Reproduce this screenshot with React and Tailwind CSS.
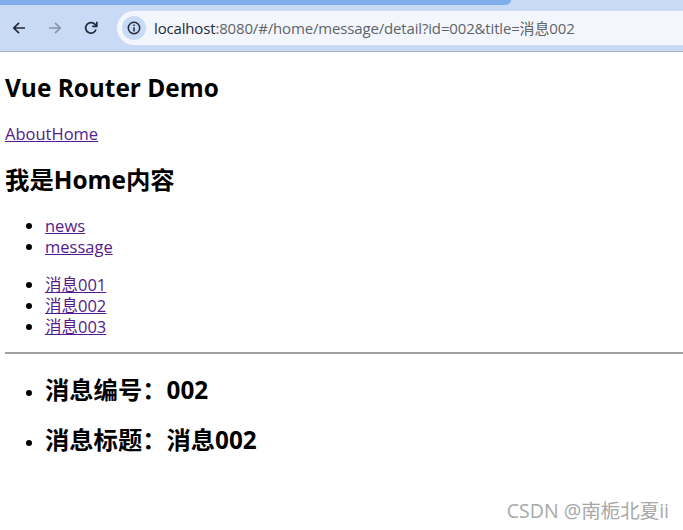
const FONT = "font-['Open_Sans','Noto_Sans_CJK_SC',sans-serif]";

function Back({ color, flip }) {
  return (
    <svg width="16" height="16" viewBox="0 0 16 16" fill="none" stroke={color} strokeWidth="1.7" style={flip ? { transform: "scaleX(-1)" } : undefined}>
      <path d="M14 8H3M8 2.8 2.8 8 8 13.2" />
    </svg>
  );
}

function Reload() {
  return (
    <svg width="16" height="16" viewBox="0 0 16 16" fill="none" stroke="#1f2937" strokeWidth="1.7">
      <path d="M13 9.5A5.3 5.3 0 1 1 11.8 4.2L13.6 6" />
      <path d="M13.8 1.8V6.4H9.2" fill="none" />
    </svg>
  );
}

function Link({ children }) {
  return <a href="#" className="text-[#551a8b] underline">{children}</a>;
}

export default function App() {
  return (
    <div className={`relative h-[530px] w-[683px] overflow-hidden bg-white text-black ${FONT}`}>
      <header className="h-[52px] border-b border-[#a5b1c2] bg-[#c8daf6]">
        <div className="h-[5px] w-[511px] rounded-br-[8px] bg-[#80adeb]" />
        <div className="flex h-[46px] items-center">
          <div className="ml-[11px] flex w-[106px] items-center">
            <span className="w-[36px]"><Back color="#1f2937" /></span>
            <span className="w-[36px]"><Back color="#8a94a6" flip /></span>
            <Reload />
          </div>
          <div className="flex h-[34px] w-[566px] items-center rounded-l-[17px] bg-[#f3f7fd] pl-[5px] text-[15px]">
            <span className="flex h-[24px] w-[24px] items-center justify-center rounded-full bg-[#c8daf6]">
              <svg width="14" height="14" viewBox="0 0 14 14" fill="none" stroke="#1f2937" strokeWidth="1.5">
                <circle cx="7" cy="7" r="5.7" />
                <path d="M7 6.2V10.4M7 3.6V5" />
              </svg>
            </span>
            <span className="ml-[8px] whitespace-nowrap tracking-[-0.16px] text-[#5f6368]">
              <span className="text-[#1f2937]">localhost</span>:8080/#/home/message/detail?id=002&amp;title=消息002
            </span>
          </div>
        </div>
      </header>

      <main className="px-[5px] text-[16.5px] leading-[21px]">
        <h2 className="mt-[21px] text-[24.4px] font-bold leading-[30px]">Vue Router Demo</h2>
        <p className="mt-[20px] leading-[22px]"><Link>About</Link><Link>Home</Link></p>
        <h2 className="mt-[20px] text-[24.4px] font-bold leading-[30px]">我是Home内容</h2>
        <ul className="mt-[20px] list-disc pl-[40px]">
          <li><Link>news</Link></li>
          <li><Link>message</Link></li>
        </ul>
        <ul className="mt-[17px] list-disc pl-[40px]">
          <li><Link>消息001</Link></li>
          <li><Link>消息002</Link></li>
          <li><Link>消息003</Link></li>
        </ul>
        <hr className="-mr-[5px] mt-[15px] border-t-[2px] border-[#a0a0a0]" />
        <ul className="mt-[19px] list-disc pl-[40px]">
          <li><h3 className="text-[24.3px] font-bold leading-[34px]">消息编号：002</h3></li>
          <li className="mt-[16px]"><h3 className="text-[24.3px] font-bold leading-[34px]">消息标题：消息002</h3></li>
        </ul>
      </main>

      <div className="absolute right-[14px] top-[499px] whitespace-nowrap text-[19.5px] leading-[24px] text-[#a8a8a8]">CSDN @南栀北夏ii</div>
    </div>
  );
}
